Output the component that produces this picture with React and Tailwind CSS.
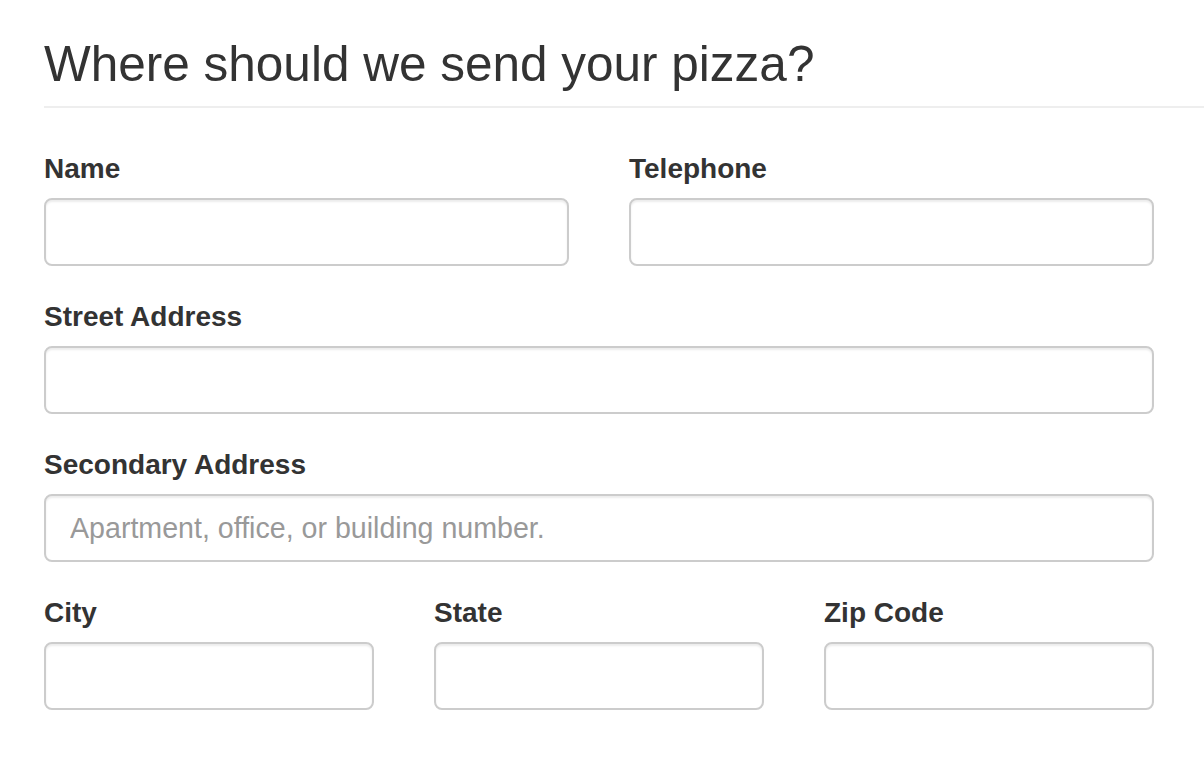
import React from 'react';

const inputClass =
  'block w-full h-[68px] px-[24px] border-2 border-[#cccccc] rounded-[8px] bg-white text-[28.6px] text-[#555555] shadow-[inset_0_2px_2px_rgba(0,0,0,0.075)] outline-none placeholder:text-[#999999]';

const Field = ({ label, placeholder }) => (
  <div className="mb-[30px]">
    <label className="block h-[42px] mb-[8px] text-[28px] leading-[42px] font-bold text-[#333333]">
      {label}
    </label>
    <input type="text" className={inputClass} placeholder={placeholder} />
  </div>
);

const App = () => {
  return (
    <div
      className="min-h-screen bg-white pl-[44px] pt-[36px] text-[#333333]"
      style={{ fontFamily: '"Liberation Sans", Arial, sans-serif' }}
    >
      <div className="border-b-2 border-[#eeeeee] pb-[15px] mb-[40px]">
        <h1 className="text-[49.5px] leading-[55px] font-normal">Where should we send your pizza?</h1>
      </div>

      <form className="w-[1110px]">
        <div className="grid grid-cols-2 gap-x-[60px]">
          <Field label="Name" />
          <Field label="Telephone" />
        </div>
        <Field label="Street Address" />
        <Field label="Secondary Address" placeholder="Apartment, office, or building number." />
        <div className="grid grid-cols-3 gap-x-[60px]">
          <Field label="City" />
          <Field label="State" />
          <Field label="Zip Code" />
        </div>
      </form>
    </div>
  );
};

export default App;
